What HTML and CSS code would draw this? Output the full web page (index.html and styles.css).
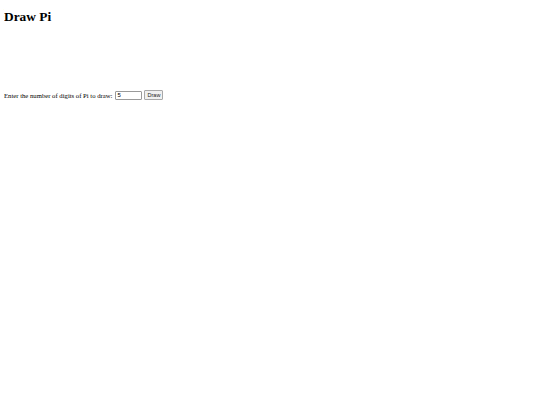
FILE: index.html
```html
<!DOCTYPE html>
<html>
<head>
<meta charset="utf-8">
<link rel="stylesheet" href="styles.css">
</head>
<body class="page">
<h1 class="title">Draw Pi</h1>
<div class="canvas-space"></div>
<div class="controls">
<label class="label" for="digits">Enter the number of digits of Pi to draw:</label>
<input class="digits" id="digits" type="text" value="5">
<button class="draw">Draw</button>
</div>
</body>
</html>
```
FILE: styles.css
```css
html { background: #fff; }
.page {
  margin: 4px;
  font-family: "Liberation Serif", serif;
  font-size: 6.8px;
  color: #000;
}
.title {
  font-size: 13.4px;
  font-weight: bold;
  margin: 5px 0 0 0;
  line-height: 16px;
}
.canvas-space {
  height: 64px;
}
.controls {
  display: flex;
  align-items: center;
  height: 12px;
}
.label {
  font-size: 6.7px;
  margin-right: 3px;
}
.digits {
  box-sizing: border-box;
  width: 27px;
  height: 9px;
  padding: 0 1px;
  margin: 0 2px 0 0;
  border: 1px solid #9a9a9a;
  border-radius: 1px;
  font-family: "Liberation Sans", sans-serif;
  font-size: 6px;
}
.draw {
  box-sizing: border-box;
  width: 19px;
  height: 10px;
  padding: 0;
  margin: 0;
  border: 1px solid #a8a8a8;
  border-radius: 1px;
  background: #f0f0f0;
  font-family: "Liberation Sans", sans-serif;
  font-size: 5.5px;
  color: #222;
}
```
